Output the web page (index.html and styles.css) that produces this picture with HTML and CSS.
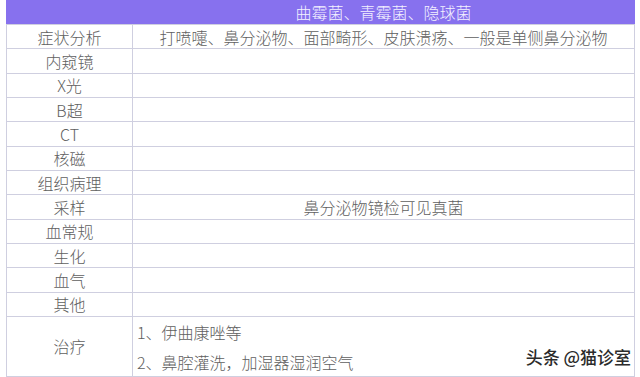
FILE: index.html
```html
<!DOCTYPE html>
<html lang="zh">
<head>
<meta charset="utf-8">
<link rel="stylesheet" href="styles.css">
</head>
<body>
<div class="sheet">
  <div class="head">曲霉菌、青霉菌、隐球菌</div>
  <div class="c k">症状分析</div><div class="c v">打喷嚏、鼻分泌物、面部畸形、皮肤溃疡、一般是单侧鼻分泌物</div>
  <div class="c k">内窥镜</div><div class="c v"></div>
  <div class="c k">X光</div><div class="c v"></div>
  <div class="c k">B超</div><div class="c v"></div>
  <div class="c k">CT</div><div class="c v"></div>
  <div class="c k">核磁</div><div class="c v"></div>
  <div class="c k">组织病理</div><div class="c v"></div>
  <div class="c k">采样</div><div class="c v">鼻分泌物镜检可见真菌</div>
  <div class="c k">血常规</div><div class="c v"></div>
  <div class="c k">生化</div><div class="c v"></div>
  <div class="c k">血气</div><div class="c v"></div>
  <div class="c k">其他</div><div class="c v"></div>
  <div class="c k">治疗</div>
  <div class="c list">
    <div class="item">1、伊曲康唑等</div>
    <div class="item">2、鼻腔灌洗，加湿器湿润空气</div>
  </div>
</div>
<div class="mark">头条 @猫诊室</div>
</body>
</html>
```
FILE: styles.css
```css
html, body {
  margin: 0;
  padding: 0;
  background: #ffffff;
  width: 640px;
  height: 377px;
  overflow: hidden;
}
body {
  font-family: "Noto Sans CJK SC", "Noto Sans", sans-serif;
  color: #606060;
  position: relative;
}
.sheet {
  margin-left: 6px;
  width: 629px;
  height: 377px;
  box-sizing: border-box;
  padding: 0 1px 1px 1px;
  background: #cfcfe0;
  display: grid;
  grid-template-columns: 125px 501px;
  grid-template-rows: 24px repeat(12, 23.33px) 1fr;
  column-gap: 1px;
  row-gap: 1px;
}
.head {
  grid-column: 1 / 3;
  background: #8771ee;
  color: #f4f2ff;
  font-size: 16px;
  font-weight: 300;
  display: flex;
  align-items: center;
  justify-content: center;
  padding-left: 126px;
  margin: 0 -1px;
}
.c {
  background: #ffffff;
  font-size: 16px;
  font-weight: 300;
  display: flex;
  align-items: center;
  justify-content: center;
  line-height: 1;
  white-space: nowrap;
}
.list {
  flex-direction: column;
  align-items: flex-start;
  justify-content: flex-end;
  gap: 14px;
  padding: 0 0 6px 4px;
}
.mark {
  position: absolute;
  right: 9px;
  top: 348px;
  font-size: 17px;
  font-weight: 500;
  color: #2b2b2b;
  line-height: 1;
  text-shadow: 0 0 2px #ffffff, 0 0 2px #ffffff;
}
```
